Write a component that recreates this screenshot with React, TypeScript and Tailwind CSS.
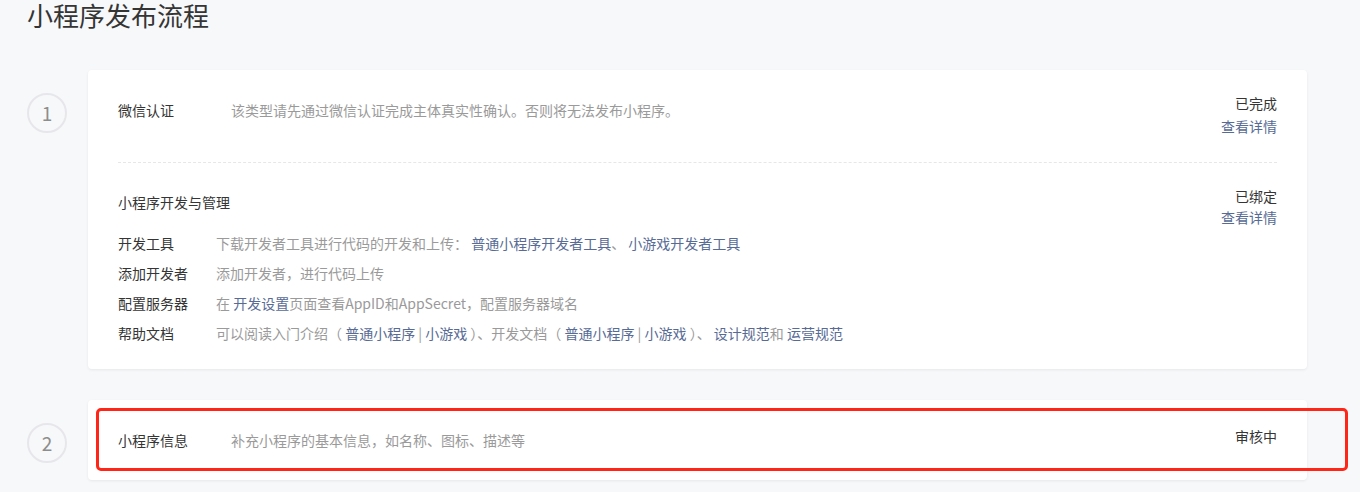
const font = { fontFamily: '"Noto Sans CJK SC", "Liberation Sans", sans-serif' };

function Step({ n }: { n: number }) {
  return (
    <div className="mt-[23px] w-10 h-10 shrink-0 rounded-full border-2 border-[#e7e7eb] flex items-center justify-center text-[19px] text-[#8d8d8d]">
      {n}
    </div>
  );
}

function Link({ children }: { children: React.ReactNode }) {
  return <span className="text-[#576b95]">{children}</span>;
}

function Row({ label, children }: { label: string; children: React.ReactNode }) {
  return (
    <div className="flex leading-[30px]">
      <div className="w-[98px] shrink-0 text-[#353535]">{label}</div>
      <div className="text-[#9a9a9a]">{children}</div>
    </div>
  );
}

export default function App() {
  return (
    <div style={font} className="w-[1360px] h-[492px] overflow-hidden bg-[#f7f8fa] text-[14px] relative">
      <h1 className="pl-[27px] pt-[1px] text-[26px] leading-[28px] text-[#353535] font-normal">小程序发布流程</h1>

      <div className="mt-[41px] pl-[27px] flex gap-[21px]">
        <Step n={1} />
        <div className="w-[1219px] bg-white rounded-[4px] shadow-[0_1px_3px_rgba(0,0,0,0.07)] px-[30px]">
          <div className="pt-[22px] pb-[24px] flex justify-between border-b border-dashed border-[#e7e7e7]">
            <div className="flex mt-[7px] leading-[22px]">
              <div className="w-[113px] text-[#353535]">微信认证</div>
              <div className="text-[#9a9a9a]">该类型请先通过微信认证完成主体真实性确认。否则将无法发布小程序。</div>
            </div>
            <div className="text-right leading-[23px]">
              <div className="text-[#353535]">已完成</div>
              <Link>查看详情</Link>
            </div>
          </div>

          <div className="pt-[23px] pb-[21px]">
            <div className="flex justify-between">
              <div className="mt-[5px] leading-[22px] text-[#353535]">小程序开发与管理</div>
              <div className="text-right leading-[21px]">
                <div className="text-[#353535]">已绑定</div>
                <Link>查看详情</Link>
              </div>
            </div>
            <Row label="开发工具">
              下载开发者工具进行代码的开发和上传： <Link>普通小程序开发者工具</Link>、 <Link>小游戏开发者工具</Link>
            </Row>
            <Row label="添加开发者">添加开发者，进行代码上传</Row>
            <Row label="配置服务器">
              在 <Link>开发设置</Link>页面查看AppID和AppSecret，配置服务器域名
            </Row>
            <Row label="帮助文档">
              可以阅读入门介绍（ <Link>普通小程序</Link> | <Link>小游戏</Link> ）、开发文档（ <Link>普通小程序</Link> | <Link>小游戏</Link> ）、 <Link>设计规范</Link>和 <Link>运营规范</Link>
            </Row>
          </div>
        </div>
      </div>

      <div className="mt-[31px] pl-[27px] flex gap-[21px]">
        <Step n={2} />
        <div className="w-[1219px] h-[80px] bg-white rounded-[4px] shadow-[0_1px_3px_rgba(0,0,0,0.07)] px-[30px] pt-[25px] flex justify-between">
          <div className="flex mt-[4px] leading-[22px]">
            <div className="w-[113px] text-[#353535]">小程序信息</div>
            <div className="text-[#9a9a9a]">补充小程序的基本信息，如名称、图标、描述等</div>
          </div>
          <div className="leading-[22px] text-[#353535]">审核中</div>
        </div>
      </div>

      {/* red annotation box */}
      <div className="absolute left-[96px] top-[408px] w-[1252px] h-[63px] border-[3px] border-[#ff2618] rounded-[5px]" />
    </div>
  );
}
